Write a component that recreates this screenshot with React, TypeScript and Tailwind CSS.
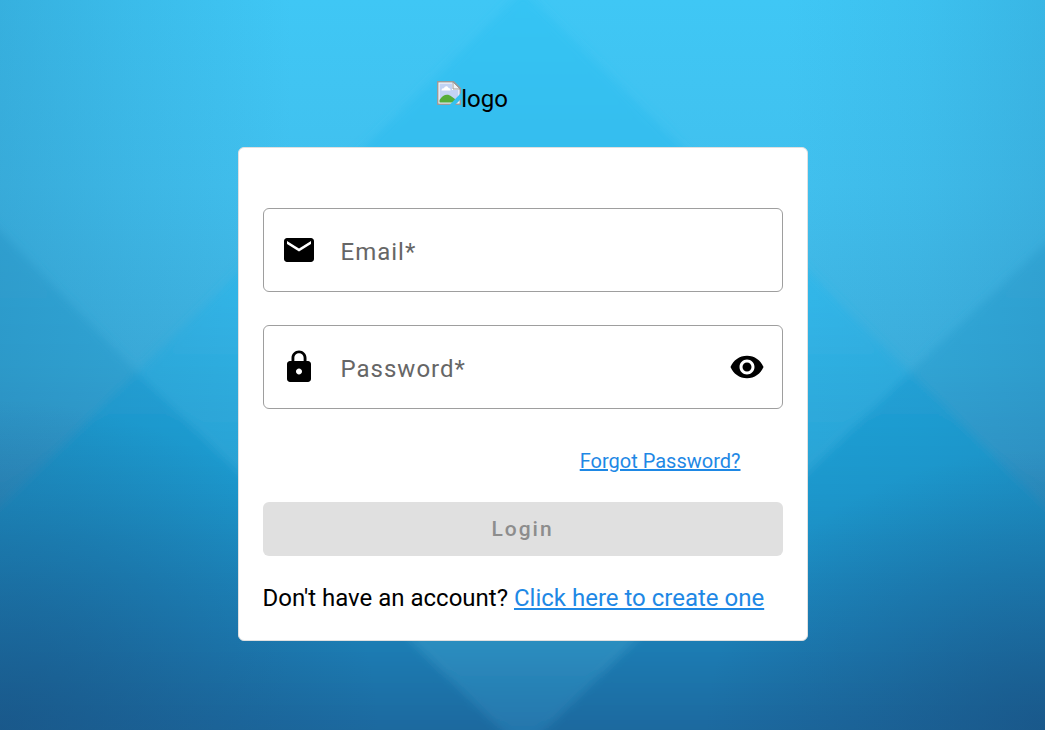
import { useState } from "react";
import { MdEmail, MdLock, MdVisibility, MdVisibilityOff } from "react-icons/md";

function Background() {
  return (
    <svg
      className="absolute inset-0 -z-10 h-full w-full"
      viewBox="0 0 1045 730"
      preserveAspectRatio="none"
      aria-hidden="true"
    >
      <defs>
        <linearGradient id="sky" gradientUnits="userSpaceOnUse" x1="0" y1="0" x2="0" y2="372">
          <stop offset="0" stopColor="#3fc7f5" />
          <stop offset="0.5" stopColor="#41c0ee" />
          <stop offset="1" stopColor="#3eb0de" />
        </linearGradient>
        <linearGradient id="center" gradientUnits="userSpaceOnUse" x1="0" y1="0" x2="0" y2="730">
          <stop offset="0" stopColor="#36c4f4" />
          <stop offset="0.4" stopColor="#32b7e9" />
          <stop offset="0.62" stopColor="#2ba6d8" />
          <stop offset="0.88" stopColor="#2b8dbf" />
          <stop offset="1" stopColor="#2476ac" />
        </linearGradient>
        <linearGradient id="side" gradientUnits="userSpaceOnUse" x1="0" y1="225" x2="0" y2="505">
          <stop offset="0" stopColor="#36b0e0" />
          <stop offset="0.5" stopColor="#31a8d8" />
          <stop offset="1" stopColor="#2f92c4" />
        </linearGradient>
        <linearGradient id="deep" gradientUnits="userSpaceOnUse" x1="0" y1="372" x2="0" y2="730">
          <stop offset="0" stopColor="#20a4d9" />
          <stop offset="0.35" stopColor="#1e97cc" />
          <stop offset="0.75" stopColor="#1e7db4" />
          <stop offset="1" stopColor="#1d699f" />
        </linearGradient>
        <linearGradient id="edges">
          <stop offset="0" stopColor="#1c6b9c" stopOpacity="0.25" />
          <stop offset="0.13" stopColor="#1c6b9c" stopOpacity="0.12" />
          <stop offset="0.28" stopColor="#1c6b9c" stopOpacity="0" />
          <stop offset="0.75" stopColor="#1c6b9c" stopOpacity="0" />
          <stop offset="0.88" stopColor="#1c6b9c" stopOpacity="0.07" />
          <stop offset="1" stopColor="#1c6b9c" stopOpacity="0.18" />
        </linearGradient>
        <radialGradient id="corner">
          <stop offset="0" stopColor="#184f80" stopOpacity="0.65" />
          <stop offset="0.5" stopColor="#184f80" stopOpacity="0.3" />
          <stop offset="1" stopColor="#184f80" stopOpacity="0" />
        </radialGradient>
        <filter id="soft" x="-5%" y="-5%" width="110%" height="110%">
          <feGaussianBlur stdDeviation="5" />
        </filter>
      </defs>
      <rect width="1045" height="730" fill="url(#sky)" />
      <g filter="url(#soft)">
        <path d="M-20 525 137 372 523 750 910 372 1065 525V760H-20Z" fill="url(#deep)" />
        <path d="M-20 210 137 372-20 525Z" fill="url(#side)" />
        <path d="M1065 225 910 372l155 153Z" fill="url(#side)" />
        <path d="M523-10 910 372 523 750 137 372Z" fill="url(#center)" />
      </g>
      <rect width="1045" height="730" fill="url(#edges)" />
      <ellipse cx="0" cy="730" rx="380" ry="330" fill="url(#corner)" />
      <ellipse cx="1045" cy="730" rx="340" ry="280" fill="url(#corner)" />
    </svg>
  );
}

function Logo() {
  return (
    <div className="flex h-9 justify-center pr-[100px] text-2xl leading-9">
      <svg className="h-6 w-6" viewBox="0 0 24 24" aria-hidden="true">
        <path d="M0 0H17L24 7V24H0Z" fill="#9b9b9b" />
        <path d="M1.5 1.5H16L22.5 8V22.5H1.5Z" fill="#fff" />
        <path d="M2.5 2.5H15V9H21.5V21.5H2.5Z" fill="#c3d3f3" />
        <path d="M4.5 9.5C4.5 7.5 6 7 7 7.2 7.500 4.500 11 4.500 11.500 7 13 7 13.500 8 13.500 9.500Z" fill="#fff" />
        <path d="M2.500 21.500V19C6 13 11 12.500 14.500 15.500L18 18V21.500Z" fill="#55ad38" />
        <path d="M16 1V8H23Z" fill="#f4f4f4" stroke="#9b9b9b" />
        <path d="M24 12 12.500 24H18L24 18Z" fill="#35c0f1" />
      </svg>
      <span>logo</span>
    </div>
  );
}

const fieldClass =
  "flex h-[84px] items-center rounded-md border border-[#9e9e9e] px-[17px] focus-within:border-[#1e88e5]";
const inputClass =
  "ml-6 min-w-0 flex-1 bg-transparent pt-1 text-2xl tracking-[1px] text-black outline-none placeholder:text-[#666666]";

export default function App() {
  const [email, setEmail] = useState("");
  const [password, setPassword] = useState("");
  const [visible, setVisible] = useState(false);

  return (
    <main className="relative isolate min-h-screen overflow-hidden pt-[81px] pb-8 font-[Roboto,sans-serif] text-black">
      <Background />
      <Logo />

      <form
        className="mx-auto mt-[30px] max-w-[570px] rounded-md border border-[#e0e0e0] bg-white px-6 pt-[60px] pb-6"
        onSubmit={(e) => e.preventDefault()}
      >
        <div className={fieldClass}>
          <label htmlFor="email" aria-label="Email">
            <MdEmail className="size-9 shrink-0" />
          </label>
          <input
            id="email"
            type="email"
            required
            placeholder="Email*"
            className={inputClass}
            value={email}
            onChange={(e) => setEmail(e.target.value)}
          />
        </div>

        <div className={`${fieldClass} mt-[33px]`}>
          <label htmlFor="password" aria-label="Password">
            <MdLock className="size-9 shrink-0" />
          </label>
          <input
            id="password"
            type={visible ? "text" : "password"}
            required
            placeholder="Password*"
            className={inputClass}
            value={password}
            onChange={(e) => setPassword(e.target.value)}
          />
          <button
            type="button"
            aria-label={visible ? "Hide password" : "Show password"}
            onClick={() => setVisible(!visible)}
          >
            {visible ? <MdVisibilityOff className="size-9" /> : <MdVisibility className="size-9" />}
          </button>
        </div>

        <div className="mt-10 pr-[42px] text-right text-[20px] leading-6">
          <a href="/forgot-password" className="text-[#1e88e5] underline">Forgot Password?</a>
        </div>

        <button
          type="submit"
          disabled={!email || !password}
          className="mt-[29px] h-[54px] w-full rounded-md bg-[#1e88e5] pt-0.5 text-[21px] font-medium tracking-[2px] text-white disabled:bg-[#e0e0e0] disabled:text-[#8d8d8d]"
        >
          Login
        </button>

        <p className="mt-6 text-2xl leading-9">
          Don't have an account?{" "}
          <a href="/register" className="text-[#1e88e5] underline">Click here to create one</a>
        </p>
      </form>
    </main>
  );
}
